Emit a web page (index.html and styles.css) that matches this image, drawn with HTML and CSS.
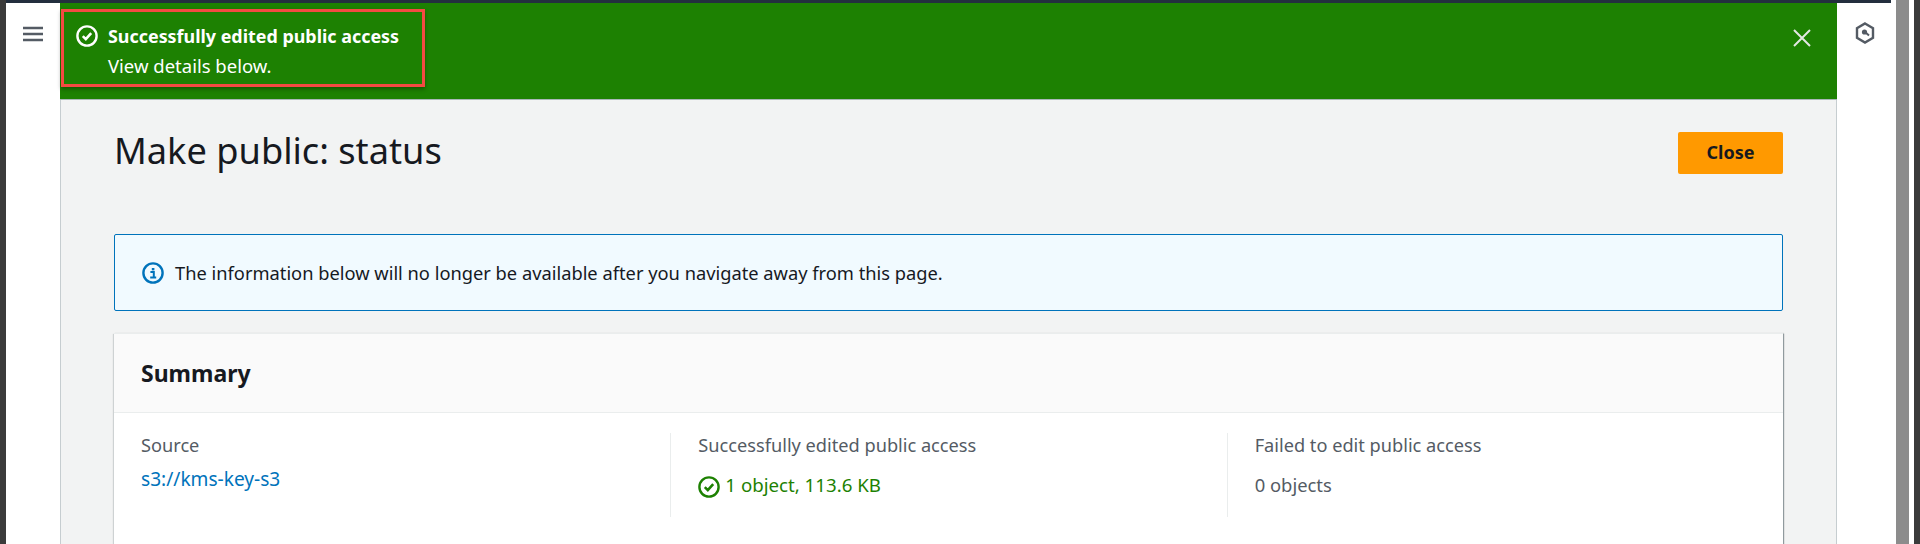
FILE: index.html
```html
<!DOCTYPE html>
<html lang="en">
  <head>
    <meta charset="UTF-8" />
    <title>Make public: status</title>
    <link rel="stylesheet" href="styles.css">
  </head>
  <body>
    <div class="edgeLeft"></div>
    <div class="window">
      <div class="topLine"></div>
      <div class="shell">
        <div class="sideNav">
          <svg class="menuIcon" width="20" height="16" viewBox="0 0 20 16">
            <path d="M0 2h20M0 8h20M0 14h20" stroke="#545b64" stroke-width="2.4" fill="none"/>
          </svg>
        </div>
        <div class="content">
          <div class="flash">
            <div class="flashBox">
              <svg class="flashIcon" width="22" height="22" viewBox="0 0 22 22">
                <circle cx="11" cy="11" r="9.6" stroke="#fff" stroke-width="2.4" fill="none"/>
                <path d="M6.8 11.2l3 3 5.4-6" stroke="#fff" stroke-width="2.6" fill="none"/>
              </svg>
              <div>
                <div class="flashTitle">Successfully edited public access</div>
                <div class="flashText">View details below.</div>
              </div>
            </div>
            <svg class="flashClose" width="18" height="18" viewBox="0 0 18 18">
              <path d="M1 1l16 16M17 1L1 17" stroke="#e4e7e4" stroke-width="2" fill="none"/>
            </svg>
          </div>
          <div class="main">
            <div class="pageHead">
              <h1>Make public: status</h1>
              <button class="closeBtn">Close</button>
            </div>
            <div class="infoBox">
              <svg width="22" height="22" viewBox="0 0 22 22">
                <circle cx="11" cy="11" r="9.6" stroke="#0073bb" stroke-width="2.4" fill="none"/>
                <path d="M8.4 10h3.4v5M8.2 15.4h6" stroke="#0073bb" stroke-width="2" fill="none"/>
                <path d="M9.8 6h2.6v2.4H9.8z" fill="#0073bb"/>
              </svg>
              <span>The information below will no longer be available after you navigate away from this page.</span>
            </div>
            <div class="card">
              <div class="cardHead">Summary</div>
              <div class="cardBody">
                <div class="col">
                  <div class="label">Source</div>
                  <a class="link" href="#">s3://kms-key-s3</a>
                </div>
                <div class="col">
                  <div class="label">Successfully edited public access</div>
                  <div class="okValue">
                    <svg class="okIcon" width="22" height="22" viewBox="0 0 22 22">
                      <circle cx="11" cy="11" r="9.6" stroke="#1d8102" stroke-width="2.4" fill="none"/>
                      <path d="M6.8 11.2l3 3 5.4-6" stroke="#1d8102" stroke-width="2.6" fill="none"/>
                    </svg>
                    <span>1 object, 113.6 KB</span>
                  </div>
                </div>
                <div class="col">
                  <div class="label">Failed to edit public access</div>
                  <div class="value">0 objects</div>
                </div>
              </div>
            </div>
          </div>
        </div>
        <div class="sideTools">
          <svg width="20" height="22" viewBox="0 0 20 22">
            <path d="M10 1.5l8 4.6v9.8l-8 4.6-8-4.6V6.1z" stroke="#545b64" stroke-width="2.4" fill="none"/>
            <circle cx="9.5" cy="10" r="2.6" fill="#545b64"/>
            <path d="M10 10l4 3.5" stroke="#545b64" stroke-width="2"/>
          </svg>
        </div>
      </div>
    </div>
    <div class="scrollGap"></div>
    <div class="scrollThumb"></div>
    <div class="scrollGap2"></div>
    <div class="edgeRight"></div>
  </body>
</html>
```

FILE: styles.css
```css
html,
body {
  margin: 0;
  height: 544px;
  overflow: hidden;
}
body {
  display: flex;
  font-family: "Noto Sans", "Open Sans", sans-serif;
  font-size: 18.2px;
  color: #16191f;
  background: #fff;
}
.edgeLeft,
.edgeRight {
  width: 6px;
  background: #3b3b3b;
}
.window {
  flex: 1;
  min-width: 0;
  display: flex;
  flex-direction: column;
}
.topLine {
  height: 3px;
  background: #232f3e;
}
.shell {
  flex: 1;
  display: flex;
  min-height: 0;
}
.sideNav {
  width: 54px;
  flex: none;
  padding: 20px 0 0 17px;
  box-sizing: border-box;
}
.content {
  flex: 1;
  min-width: 0;
  display: flex;
  flex-direction: column;
}
.flash {
  height: 97px;
  flex: none;
  box-sizing: border-box;
  background: #1d8102;
  border-bottom: 1px solid #aab7b8;
  display: flex;
  align-items: flex-start;
  justify-content: space-between;
  padding: 6px 26px 0 1px;
  color: #fff;
}
.flashBox {
  width: 364px;
  height: 78px;
  box-sizing: border-box;
  border: 3px solid #f44a42;
  box-shadow: 0 2px 4px rgba(0, 0, 0, 0.35);
  display: flex;
  gap: 10px;
  padding: 10px 0 0 12px;
  white-space: nowrap;
}
.flashIcon {
  margin-top: 3px;
}
.flashTitle {
  font-size: 17.9px;
  font-weight: 700;
  line-height: 28px;
}
.flashText {
  line-height: 31px;
  font-size: 18.5px;
}
.flashClose {
  margin-top: 20px;
}
.main {
  flex: 1;
  min-height: 0;
  display: flex;
  flex-direction: column;
  background: #f2f3f3;
  border-left: 1px solid #c6cdd0;
  border-right: 1px solid #c6cdd0;
  padding: 0 53px;
}
.pageHead {
  display: flex;
  flex: none;
  justify-content: space-between;
  align-items: flex-start;
  height: 134px;
  padding-top: 32px;
  box-sizing: border-box;
}
h1 {
  margin: -4px 0 0;
  font-size: 36.2px;
  font-weight: 400;
  line-height: 44px;
}
.closeBtn {
  width: 105px;
  height: 42px;
  padding: 0 0 2px;
  background: #ff9900;
  border: none;
  border-radius: 2px;
  font: 700 18px "Noto Sans", "Open Sans", sans-serif;
  color: #16191f;
}
.infoBox {
  height: 77px;
  flex: none;
  box-sizing: border-box;
  background: #f1faff;
  border: 1px solid #0073bb;
  border-radius: 2px;
  display: flex;
  align-items: center;
  gap: 11px;
  padding-left: 27px;
  font-size: 18.3px;
}
.card {
  margin-top: 22px;
  flex: 1;
  min-height: 0;
  background: #fff;
  box-shadow: 1px 1px 1px rgba(0, 28, 36, 0.3), 1px 0 1px rgba(0, 28, 36, 0.15), -1px 1px 1px rgba(0, 28, 36, 0.15);
  border-top: 1px solid #eaeded;
}
.cardHead {
  height: 79px;
  box-sizing: border-box;
  background: #fafafa;
  border-bottom: 1px solid #eaeded;
  padding: 24px 27px 0;
  font-size: 23px;
  font-weight: 700;
  line-height: 30px;
}
.cardBody {
  display: grid;
  grid-template-columns: repeat(3, 1fr);
  padding: 20px 0 0;
}
.col {
  height: 84px;
  padding-left: 27px;
  border-left: 1px solid #eaeded;
  line-height: 24px;
}
.col:first-child {
  border-left: none;
}
.label {
  color: #545b64;
  margin-bottom: 10px;
}
.link {
  display: block;
  color: #0073bb;
  text-decoration: none;
  font-size: 19.1px;
}
.okValue {
  color: #1d8102;
  display: flex;
  gap: 5px;
  align-items: flex-start;
  margin-top: 16px;
  font-size: 18.7px;
}
.okIcon {
  margin-top: 3px;
}
.value {
  margin-top: 16px;
  color: #545b64;
  font-size: 18.4px;
}
.sideTools {
  width: 54px;
  flex: none;
  padding: 19px 0 0 18px;
  box-sizing: border-box;
}
.scrollGap {
  width: 5px;
}
.scrollThumb {
  width: 13px;
  background: #8c8c8c;
}
.scrollGap2 {
  width: 5px;
}
```
